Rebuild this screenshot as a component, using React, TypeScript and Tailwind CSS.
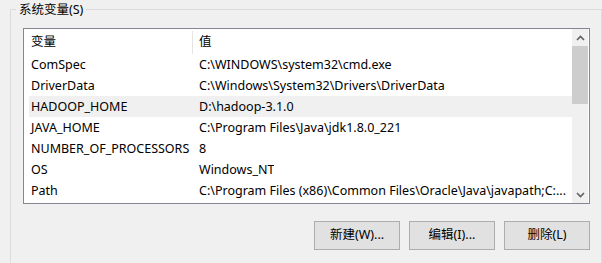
const rows = [
  { name: "ComSpec", value: "C:\\WINDOWS\\system32\\cmd.exe" },
  { name: "DriverData", value: "C:\\Windows\\System32\\Drivers\\DriverData" },
  { name: "HADOOP_HOME", value: "D:\\hadoop-3.1.0", selected: true },
  { name: "JAVA_HOME", value: "C:\\Program Files\\Java\\jdk1.8.0_221" },
  { name: "NUMBER_OF_PROCESSORS", value: "8" },
  { name: "OS", value: "Windows_NT" },
  { name: "Path", value: "C:\\Program Files (x86)\\Common Files\\Oracle\\Java\\javapath;C:..." },
]

function Chevron({ down }: { down?: boolean }) {
  return (
    <svg width="9" height="6" viewBox="0 0 9 6" className="block">
      <polyline
        points={down ? "1,1 4.5,4.5 8,1" : "1,5 4.5,1.5 8,5"}
        fill="none"
        stroke="#606060"
        strokeWidth="1.6"
      />
    </svg>
  )
}

export default function App() {
  return (
    <div
      className="w-[602px] h-[263px] overflow-hidden bg-[#f0f0f0] text-black text-[12.5px]"
      style={{ fontFamily: '"Noto Sans", "Noto Sans CJK SC", sans-serif' }}
    >
      <fieldset className="ml-[10px] min-w-0 h-[300px] border border-b-0 border-[#dcdcdc] pl-[12px] pr-[11px]">
        <legend className="-ml-[7px] px-[3px] leading-[19px]">系统变量(S)</legend>

        {/* List view */}
        <div className="mt-[9px] h-[176px] border border-[#828790] bg-white flex">
          <div className="flex-1 min-w-0 pl-[5px]">
            <div className="h-[25px] flex items-center pt-px">
              <div className="w-[163px] pl-[2px]">变量</div>
              <div className="w-px h-[23px] bg-[#e5e5e5]" />
              <div className="pl-[6px]">值</div>
            </div>
            {rows.map((r) => (
              <div
                key={r.name}
                className={`h-[21px] flex items-center pt-px whitespace-nowrap ${r.selected ? "bg-[#f0f0f0]" : ""}`}
              >
                <div className="w-[170px] shrink-0 pl-[2px]">{r.name}</div>
                <div className="min-w-0 overflow-hidden">{r.value}</div>
              </div>
            ))}
          </div>

          {/* Scrollbar */}
          <div className="w-[16px] shrink-0 mr-px bg-[#f0f0f0] flex flex-col items-center">
            <div className="h-[17px] flex items-center justify-center">
              <Chevron />
            </div>
            <div className="w-full h-[58px] bg-[#cdcdcd]" />
            <div className="flex-1" />
            <div className="h-[17px] flex items-center justify-center">
              <Chevron down />
            </div>
          </div>
        </div>

        {/* Buttons */}
        <div className="mt-[17px] flex justify-end gap-[9px]">
          {["新建(W)...", "编辑(I)...", "删除(L)"].map((label) => (
            <button
              key={label}
              className="w-[86px] h-[29px] border border-[#adadad] bg-[#e1e1e1] flex items-center justify-center"
            >
              {label}
            </button>
          ))}
        </div>
      </fieldset>
    </div>
  )
}
